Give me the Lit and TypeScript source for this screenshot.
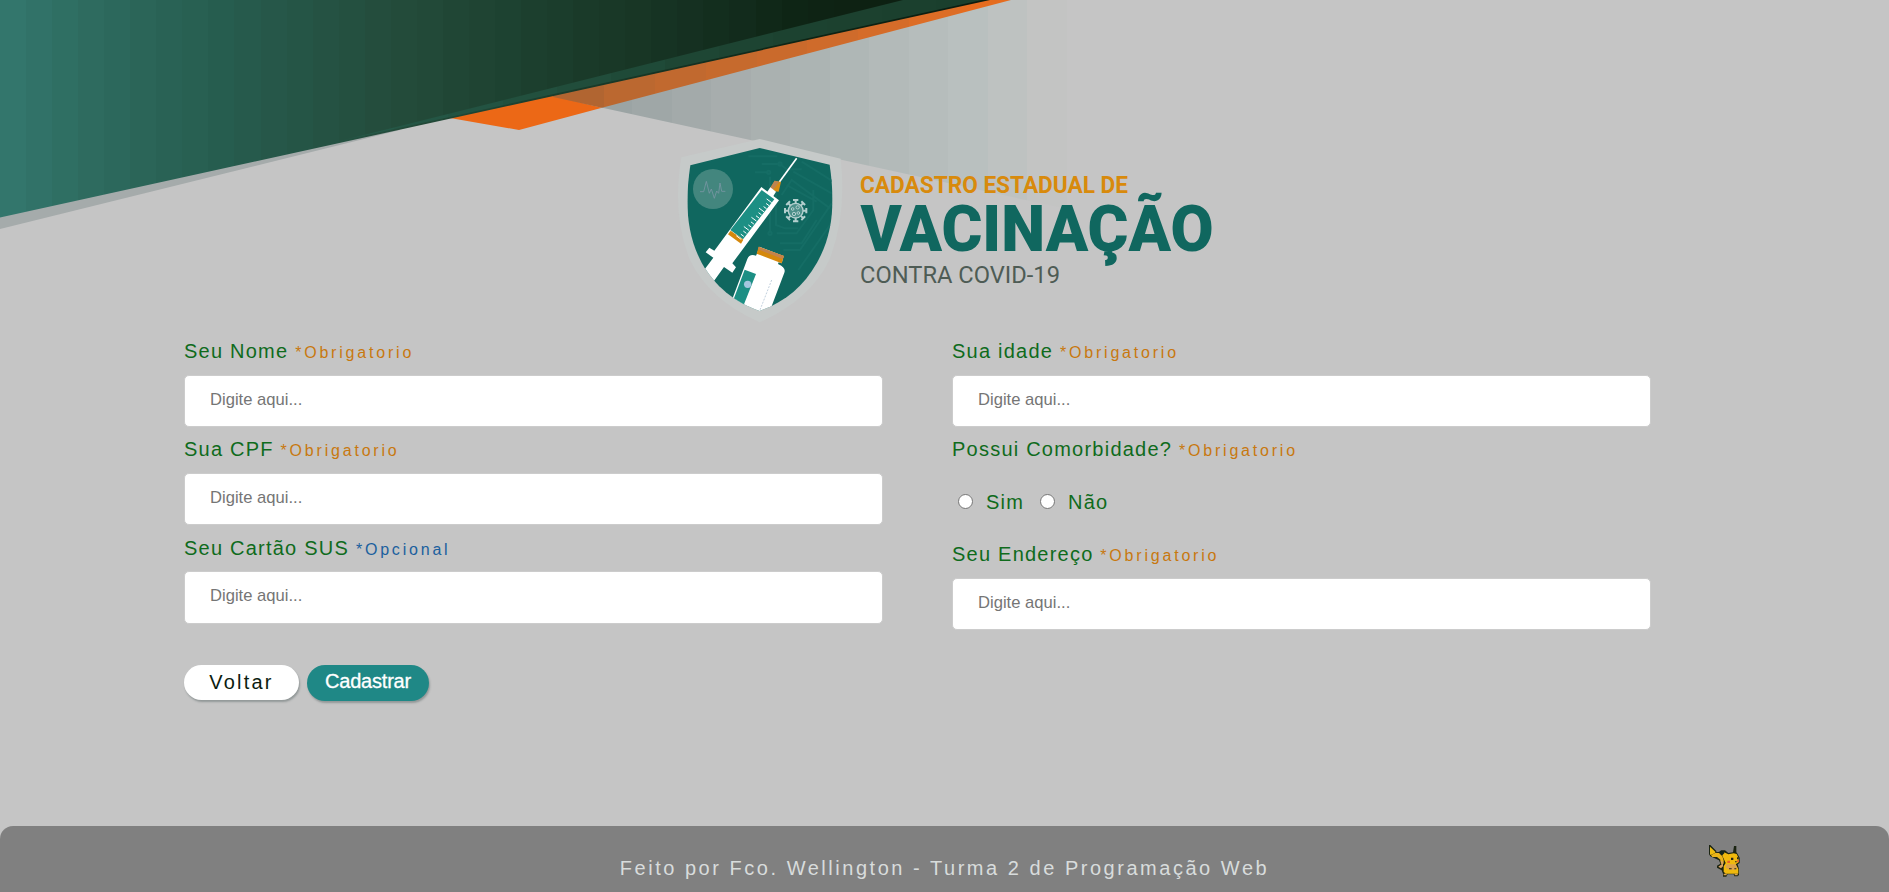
import { LitElement, html, css, svg } from "lit";
import { customElement, property } from "lit/decorators.js";

type Stop = [number, number[]];

// Splits a gradient into flat vertical bands between its colour stops.
function bands(stops: Stop[], count: number) {
  const out = [];
  const mix = (t: number) => {
    let i = 0;
    while (i < stops.length - 2 && t > stops[i + 1][0]) i++;
    const [a, ca] = stops[i];
    const [b, cb] = stops[i + 1];
    const k = Math.min(1, Math.max(0, (t - a) / (b - a)));
    return ca.map((v, n) => v + (cb[n] - v) * k);
  };
  for (let i = 0; i < count; i++) {
    const c = mix((i + 0.5) / count);
    const color = `rgb(${c.map(Math.round).join(",")})`;
    for (const edge of [i, i + 1]) {
      out.push(svg`<stop offset=${edge / count} stop-color=${color}></stop>`);
    }
  }
  return out;
}

@customElement("page-banner")
export class PageBanner extends LitElement {
  static styles = css`
    :host { display: block; }
    svg { display: block; }
  `;
  render() {
    return html`<svg width="1100" height="240" viewBox="0 0 1100 240">
      <defs>
        <linearGradient id="deep" gradientUnits="userSpaceOnUse" x1="0" y1="0" x2="990" y2="0">
          ${bands([[0, [52, 120, 110]], [0.1, [45, 106, 94]], [0.23, [38, 92, 78]], [0.34, [37, 81, 66]], [0.43, [34, 73, 56]], [0.52, [29, 65, 48]], [0.64, [24, 54, 37]], [0.73, [19, 45, 30]], [0.81, [14, 36, 20]], [1, [12, 28, 16]]], 38)}
        </linearGradient>
        <linearGradient id="facet" gradientUnits="userSpaceOnUse" x1="340" y1="0" x2="990" y2="0">
          ${bands([[0, [37, 90, 74]], [0.35, [33, 78, 60]], [0.6, [29, 68, 50]], [1, [26, 62, 44]]], 12)}
        </linearGradient>
        <linearGradient id="shade" gradientUnits="userSpaceOnUse" x1="553" y1="0" x2="1067" y2="0">
          ${bands([[0, [150, 160, 160]], [0.22, [160, 168, 168]], [0.36, [168, 174, 174]], [0.52, [173, 181, 180]], [0.68, [180, 187, 186]], [0.82, [186, 192, 191]], [0.93, [193, 195, 194]], [1, [197, 197, 197]]], 13)}
        </linearGradient>
        <linearGradient id="rust" gradientUnits="userSpaceOnUse" x1="553" y1="0" x2="1011" y2="0">
          ${bands([[0, [172, 100, 50]], [0.2, [190, 105, 48]], [0.45, [200, 106, 44]], [0.7, [211, 108, 42]], [0.88, [224, 110, 36]], [1, [234, 106, 26]]], 9)}
        </linearGradient>
      </defs>
      <polygon points="0,215 0,229 400,130 400,126" fill="#a5abab"></polygon>
      <polygon points="553,97 1067,209 1067,0 990,0" fill="url(#shade)"></polygon>
      <polygon points="440,118 450,118 519,130 602,107.7 545,94" fill="#ec6816"></polygon>
      <polygon points="553,97 602,107.7 1011,0 980,0 553,93" fill="url(#rust)"></polygon>
      <polygon points="0,0 0,217.5 990,0" fill="url(#deep)"></polygon>
      <polygon points="340,141 903,0 982,0" fill="url(#facet)"></polygon>
    </svg>`;
  }
}

@customElement("vaccine-logo")
export class VaccineLogo extends LitElement {
  static styles = css`
    :host { display: block; }
    svg { display: block; }
    .name { font-family: Roboto, "Noto Sans", sans-serif; }
  `;
  render() {
    const virusArms = [0, 45, 90, 135, 180, 225, 270, 315];
    const marks = Array.from({ length: 13 }, (_, i) => i);
    return html`<svg width="560" height="200" viewBox="0 0 560 200">
      <g transform="scale(.33333)">
        <path d="M269 27 L512 86 Q531 255 478 390 Q420 510 269 577 Q118 510 60 390 Q5 255 34 82 Z" fill="#c6cac9"></path>
        <clipPath id="shield">
          <path d="M269 54 L479 104 C495 215 491 310 441 398 C400 470 345 515 269 543 C192 515 136 470 95 398 C48 310 45 215 61 106 Z"></path>
        </clipPath>
        <g clip-path="url(#shield)">
          <rect width="540" height="600" fill="#10675f"></rect>
          <g fill="none" stroke="#156d65" stroke-width="6">
            <path d="M235 79H322M275 102H330L350 118H395M255 127H296M300 140V310M318 170V285L345 295H385M330 340H395L440 270M320 310H380L430 240V180M350 165L385 185L440 215M335 195L365 150L480 235M370 125L485 190M395 95L490 155M385 420L480 285M340 360H390L485 220"></path>
            <circle cx="330" cy="102" r="5"></circle><circle cx="296" cy="127" r="5"></circle><circle cx="300" cy="310" r="5"></circle>
          </g>
          <circle cx="129" cy="177" r="60" fill="#43867e"></circle>
          <path d="M90 185H101L109 154L118 190L124 177L133 205L140 183L146 190L150 159L155 184H166" fill="none" stroke="#7896a3" stroke-width="2.5"></path>
          <g transform="translate(377 242)" stroke="#b3cfce" fill="none" stroke-width="6">
            <circle r="22" fill="#4c8f89" stroke-width="4"></circle>
            ${virusArms.map(a => svg`<path d="M0 -22V-32M-8 -32H8" transform="rotate(${a})"></path>`)}
            <g stroke-width="3"><circle cx="-9" cy="-5" r="4"></circle><circle cx="6" cy="-10" r="5"></circle><circle cx="8" cy="7" r="4"></circle><circle cx="-5" cy="10" r="5"></circle></g>
          </g>
          <path d="M380 85L328 156" stroke="#fff" stroke-width="5"></path>
          <path d="M314 152L333 156L326 185L314 184L301 173Z" fill="#d88c14"></path>
          <path d="M314 152L328 155L309 180L301 173Z" fill="#bd8452"></path>
          <path d="M301 172L318 185L308 202L289 190Z" fill="#fff"></path>
          <path d="M274 171L327 211L187 400L198 412L187 428L162 411L128 458L95 430L130 383L107 367L118 353L133 362Z" fill="#fff"></path>
          <path d="M275 180L313 208L219 328L181 300Z" fill="#1c8f84"></path>
          <path d="M182 302L220 329L213 341L174 313Z" fill="#d5880c"></path>
          <g stroke="#fff" stroke-width="3">
            ${marks.map(i => {
              const x = 305 - i * 7.6;
              const y = 218 + i * 9.2;
              const len = i % 3 === 0 ? 15 : 9;
              return svg`<path d="M${x} ${y}l${-len} ${-len * 0.75}"></path>`;
            })}
          </g>
          <path d="M268 350L341 378L335 400L326 397L324 402Q349 413 343 428L296 552H170L232 387Q238 371 258 377L262 368Z" fill="#fff"></path>
          <path d="M266 350L342 378L335 400L260 371Z" fill="#d5880c"></path>
          <path d="M266 350L342 378L338 387L264 358Z" fill="#c3834b"></path>
          <path d="M224 419L258 432L219 530L190 510Z" fill="#1c8f84"></path>
          <circle cx="233" cy="463" r="11" fill="#a3c6de"></circle>
          <path d="M305 450L270 540" stroke="#a3b8cc" stroke-width="2" stroke-dasharray="6 4"></path>
        </g>
      </g>
      <g class="name">
        <text x="190" y="63" font-size="23.3" font-weight="700" fill="#d88a0c" textLength="268" lengthAdjust="spacingAndGlyphs">CADASTRO ESTADUAL DE</text>
        <text x="190.5" y="121" font-size="65.5" font-weight="900" fill="#10675f" textLength="353" lengthAdjust="spacingAndGlyphs">VACINAÇÃO</text>
        <text x="190" y="153" font-size="23.8" fill="#4e5c55" textLength="200" lengthAdjust="spacingAndGlyphs">CONTRA COVID-19</text>
      </g>
    </svg>`;
  }
}

@customElement("form-field")
export class FormField extends LitElement {
  @property() label = "";
  @property() note = "*Obrigatorio";
  @property({ type: Boolean }) optional = false;
  @property({ type: Boolean }) choice = false;
  static styles = css`
    :host { display: block; }
    .label { display: block; height: 35.5px; line-height: 25px; font-size: 20px; letter-spacing: 1.23px; color: #0f6b1c; white-space: nowrap; }
    .note { font-size: 16px; letter-spacing: 2.8px; color: #c8780f; }
    .note.optional { color: #1b609e; }
    .input { display: block; box-sizing: border-box; width: 699px; height: 52.5px; border: 1px solid #ccc; border-radius: 5px; background: #fff; padding: 0 25px 2px; font: 16.6px "Liberation Sans", Arial, sans-serif; outline: none; }
    .input::placeholder { color: #757575; opacity: 1; }
    .choices { display: flex; align-items: center; height: 59px; font-size: 20px; letter-spacing: 1.2px; color: #0f6b1c; }
    .option { display: flex; align-items: center; }
    .radio { appearance: none; box-sizing: border-box; width: 15px; height: 15px; margin: 0 13px 2px 6px; border: 1px solid #767676; border-radius: 50%; background: #fff; }
    .option + .option .radio { margin-left: 16px; }
  `;
  render() {
    return html`
      <label class="label">${this.label} <span class="note ${this.optional ? "optional" : ""}">${this.note}</span></label>
      ${this.choice
        ? html`<div class="choices">
            <label class="option"><input class="radio" type="radio" name="c" />Sim</label>
            <label class="option"><input class="radio" type="radio" name="c" />Não</label>
          </div>`
        : html`<input class="input" placeholder="Digite aqui..." />`}
    `;
  }
}

@customElement("pixel-mascot")
export class PixelMascot extends LitElement {
  static styles = css`
    :host { display: block; }
    svg { display: block; }
  `;
  render() {
    return html`<svg width="32" height="32" viewBox="0 0 96 96">
      <path d="M0 0H4L22 18V22L32 20L36 16H48L58 24L72 22L75 3H82V22L84 24L92 38V54L86 58L90 72V90L86 94H76L74 88H56L52 95H42V86L38 76L24 68V62L34 56L30 46L4 34L0 28Z" fill="#1b2412"></path>
      <path d="M3 5L19 20V23L8 29H3Z" fill="#eebd10"></path>
      <path d="M6 31L18 24H30L40 34L44 46V56H36L34 44L24 36H10Z" fill="#e9b41a"></path>
      <path d="M34 46L42 50V64L36 70L28 65L38 58Z" fill="#d9a060"></path>
      <path d="M42 20L58 28L74 25L83 27L89 40V52L80 58L88 72V86H50L44 80V64L50 54L40 32Z" fill="#efb90e"></path>
      <path d="M32 18H46V25L40 30L34 27Z" fill="#12251c"></path>
      <path d="M52 58H80L85 68L78 74H62L50 68Z" fill="#dca24c"></path>
      <path d="M44 86H53V91H44ZM77 86H86V91H77Z" fill="#dca24c"></path>
      <path d="M66 38h7v7h-7zM84 37h5v6h-5zM78 49h5v3h-5zM60 70h8v3h-8zM76 70h6v3h-6z" fill="#26241a"></path>
      <path d="M55 47h8v7h-8zM84 46h6v5h-6z" fill="#e8602a"></path>
    </svg>`;
  }
}

@customElement("app-root")
export class AppRoot extends LitElement {
  static styles = css`
    :host { display: flex; flex-direction: column; position: relative; box-sizing: border-box; width: 100%; height: 892px; overflow: hidden; background: #c5c5c5; font-family: "Liberation Sans", Arial, sans-serif; }
    .banner { position: absolute; top: 0; left: 0; }
    .main { position: relative; flex: 1; padding: 130px 0 0 184px; }
    .logo { margin-left: 486px; }
    .form { display: grid; grid-template-columns: 699px 699px; column-gap: 69px; margin-top: 9px; }
    .column { display: flex; flex-direction: column; gap: 10.25px; }
    .actions { display: flex; gap: 8px; margin-top: 35px; }
    .button { box-sizing: border-box; border: none; padding: 0 0 1px; border-radius: 18px; font: 20px "Liberation Sans", Arial, sans-serif; box-shadow: 1px 2px 2px rgba(70, 85, 85, .4); }
    .back { width: 115px; height: 35px; background: #fff; color: #0b1c10; letter-spacing: 2.2px; }
    .submit { width: 122px; height: 36px; padding-bottom: 3px; background: #1f8886; color: #fff; letter-spacing: -.2px; -webkit-text-stroke: .3px #fff; }
    .footer { position: relative; display: flex; justify-content: center; height: 66px; background: #808080; border-radius: 13px 13px 0 0; color: #d8dcdc; font-size: 20px; letter-spacing: 2.53px; line-height: 85px; }
    .mascot { position: absolute; left: 1709px; top: 19px; }
  `;
  render() {
    return html`
      <page-banner class="banner"></page-banner>
      <main class="main">
        <vaccine-logo class="logo"></vaccine-logo>
        <form class="form">
          <div class="column">
            <form-field label="Seu Nome"></form-field>
            <form-field label="Sua CPF"></form-field>
            <form-field label="Seu Cartão SUS" note="*Opcional" optional></form-field>
          </div>
          <div class="column">
            <form-field label="Sua idade"></form-field>
            <form-field label="Possui Comorbidade?" choice></form-field>
            <form-field label="Seu Endereço"></form-field>
          </div>
        </form>
        <div class="actions">
          <button class="button back">Voltar</button>
          <button class="button submit">Cadastrar</button>
        </div>
      </main>
      <footer class="footer">
        <span>Feito por Fco. Wellington - Turma 2 de Programação Web</span>
        <pixel-mascot class="mascot"></pixel-mascot>
      </footer>
    `;
  }
}
